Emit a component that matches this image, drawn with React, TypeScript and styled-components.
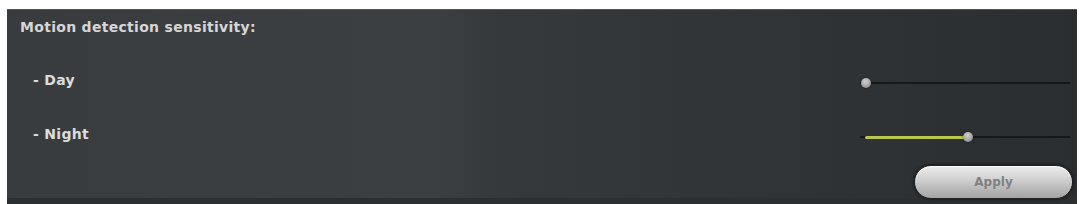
import React from "react";
import styled, { createGlobalStyle } from "styled-components";

const Global = createGlobalStyle`
  html, body { margin: 0; padding: 0; background: #ffffff; }
  body { font-family: "DejaVu Sans", "Liberation Sans", sans-serif; }
`;

const Page = styled.div`
  padding: 9px 2px 0 7px;
  height: 204px;
  box-sizing: border-box;
`;

const Panel = styled.div`
  width: 1070px;
  height: 195px;
  box-sizing: border-box;
  display: flex;
  flex-direction: column;
  padding: 0 7px 0 13px;
  background: linear-gradient(90deg, #383c3f 0%, #3b3f42 40%, #35393c 46%, #303437 70%, #2a2e31 100%);
  border-top: 1px solid #555;
  box-shadow: inset 0 -6px 0 #2c2f32;
`;

const Title = styled.div`
  height: 26px;
  padding-top: 4px;
  display: flex;
  align-items: center;
  color: #d6d6d6;
  font-size: 14px;
  font-weight: 700;
  letter-spacing: 0.3px;
`;

const Row = styled.div<{ $top: number }>`
  margin-top: ${(p) => p.$top}px;
  height: 40px;
  display: flex;
  align-items: center;
  justify-content: space-between;
`;

const Label = styled.div`
  padding-left: 13px;
  padding-bottom: 7px;
  color: #dcdcdc;
  font-size: 14px;
  font-weight: 700;
  letter-spacing: 0.3px;
`;

const Track = styled.div`
  position: relative;
  width: 210px;
  height: 2px;
  background: #16181a;
`;

const Fill = styled.div`
  position: absolute;
  left: 5px;
  top: -0.5px;
  height: 3px;
  background: #b9c74c;
  border-radius: 2px;
`;

const Thumb = styled.div`
  position: absolute;
  top: -4px;
  width: 10px;
  height: 10px;
  margin-left: -5px;
  border-radius: 50%;
  background: radial-gradient(circle at 45% 35%, #d0d0d0 0%, #a0a0a0 60%, #757575 100%);
  box-shadow: 0 0 2px rgba(0, 0, 0, 0.6);
`;

const ButtonRow = styled.div`
  margin-top: 8px;
  display: flex;
  justify-content: flex-end;
`;

const ApplyButton = styled.button`
  width: 159px;
  height: 34px;
  margin-right: -3px;
  border-radius: 17px;
  border: 1px solid #202224;
  background: linear-gradient(180deg, #ececec 0%, #d6d6d6 35%, #b6b6b6 75%, #a4a4a4 100%);
  box-shadow: 0 0 3px rgba(0, 0, 0, 0.8), inset 0 1px 1px rgba(255, 255, 255, 0.8);
  color: #808080;
  font-family: "DejaVu Sans", sans-serif;
  font-size: 12px;
  font-weight: 700;
  padding: 0;
  cursor: pointer;
`;

type SliderProps = { value: number };

const Slider: React.FC<SliderProps> = ({ value }) => {
  const min = 6;
  const max = 204;
  const x = min + (max - min) * value;
  return (
    <Track>
      {value > 0 && <Fill style={{ width: x - 5 }} />}
      <Thumb style={{ left: x }} />
    </Track>
  );
};

export default function App() {
  return (
    <>
      <Global />
      <Page>
        <Panel>
          <Title>Motion detection sensitivity:</Title>
          <Row $top={23}>
            <Label>- Day</Label>
            <Slider value={0} />
          </Row>
          <Row $top={14}>
            <Label>- Night</Label>
            <Slider value={0.515} />
          </Row>
          <ButtonRow>
            <ApplyButton>Apply</ApplyButton>
          </ButtonRow>
        </Panel>
      </Page>
    </>
  );
}
